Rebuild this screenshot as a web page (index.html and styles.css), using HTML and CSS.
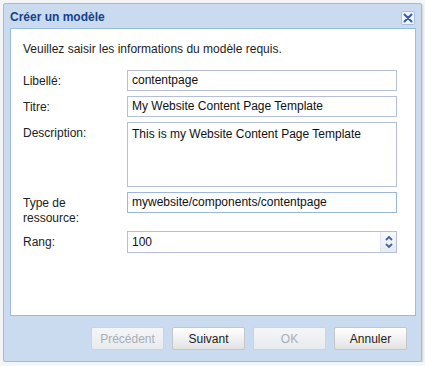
FILE: index.html
```html
<!DOCTYPE html>
<html lang="fr">
<head>
    <meta charset="UTF-8" />
    <title>Créer un modèle</title>
    <link rel="stylesheet" href="styles.css">
</head>
<body>

    <div class="dialog">
        <div class="dialog-header">
            <span class="dialog-title">Créer un modèle</span>
            <span class="close-btn">
                <svg width="10" height="10" viewBox="0 0 10 10">
                    <path d="M1.5 1.5 L8.5 8.5 M8.5 1.5 L1.5 8.5" stroke="#3c5aa5" stroke-width="2" stroke-linecap="round" fill="none" />
                </svg>
            </span>
        </div>

        <div class="dialog-body">
            <p class="intro">Veuillez saisir les informations du modèle requis.</p>

            <div class="form">
                <label class="field-label">Libellé:</label>
                <div class="field">contentpage</div>

                <label class="field-label">Titre:</label>
                <div class="field">My Website Content Page Template</div>

                <label class="field-label">Description:</label>
                <div class="field field-area">This is my Website Content Page Template</div>

                <label class="field-label">Type de<br>ressource:</label>
                <div class="field field-focus">mywebsite/components/contentpage</div>

                <label class="field-label">Rang:</label>
                <div class="field field-spin">
                    <span class="spin-value">100</span>
                    <span class="spinner">
                        <svg width="14" height="18" viewBox="0 0 14 18">
                            <path d="M4 7 L7 4 L10 7" stroke="#4a5d9c" stroke-width="1.8" fill="none" />
                            <path d="M4 11 L7 14 L10 11" stroke="#4a5d9c" stroke-width="1.8" fill="none" />
                        </svg>
                    </span>
                </div>
            </div>
        </div>

        <div class="dialog-footer">
            <button class="btn" disabled>Précédent</button>
            <button class="btn">Suivant</button>
            <button class="btn" disabled>OK</button>
            <button class="btn">Annuler</button>
        </div>
    </div>

</body>
</html>
```

FILE: styles.css
```css
body {
    font-family: 'Liberation Sans', Arial, sans-serif;
    font-size: 12px;
    margin: 0;
    padding: 3px 0 0 3px;
    background: #f4f5f7;
    color: #222;
}

.dialog {
    width: 417px;
    height: 357px;
    border: 1px solid #9fbbe0;
    border-radius: 2px;
    background: #cbdbef;
    display: flex;
    flex-direction: column;
    box-shadow: 1px 1px 2px rgba(0, 0, 0, 0.15);
}

.dialog-header {
    height: 24px;
    display: flex;
    align-items: center;
    justify-content: space-between;
    padding: 0 6px 0 6px;
}

.dialog-title {
    font-weight: bold;
    color: #15428b;
    margin-top: 1px;
}

.close-btn {
    width: 12px;
    height: 12px;
    border: 1px solid #a9c1e2;
    border-radius: 2px;
    background: #eef4fc;
    display: flex;
    align-items: center;
    justify-content: center;
    margin-top: 3px;
}

.dialog-body {
    box-sizing: border-box;
    margin: 0 5px 0 6px;
    height: 288px;
    background: #fff;
    border: 1px solid #99bbe8;
    padding: 13px 17px 0 12px;
}

.intro {
    margin: 0;
    line-height: 14px;
    color: #222;
}

.form {
    margin-top: 14px;
    display: grid;
    grid-template-columns: 104px 270px;
    row-gap: 5px;
}

.field-label {
    padding-top: 4px;
    line-height: 15px;
}

.field {
    height: 19px;
    border: 1px solid #b5bfd8;
    padding: 0 4px;
    line-height: 19px;
    color: #111;
    background: #fff;
}

.field-area {
    box-sizing: border-box;
    height: 65px;
    line-height: 14px;
    padding-top: 4px;
}

.field-focus {
    border-color: #9cb6dc;
    background: #fdfeff;
}

.field-spin {
    display: flex;
    justify-content: space-between;
    align-items: center;
    padding-right: 0;
    height: 20px;
    line-height: 20px;
}

.spinner {
    display: flex;
    align-items: center;
    justify-content: center;
    width: 15px;
    height: 20px;
    background: linear-gradient(#f6f8fb, #e6ebf2);
    border-left: 1px solid #e0e5ee;
}

.dialog-footer {
    flex: 1;
    display: flex;
    justify-content: flex-end;
    align-items: flex-start;
    gap: 8px;
    padding: 11px 14px 0 0;
}

.btn {
    width: 73px;
    height: 23px;
    font-family: 'Liberation Sans', Arial, sans-serif;
    font-size: 12px;
    color: #222;
    border: 1px solid #c3c6cc;
    border-radius: 2px;
    background: linear-gradient(#ffffff, #f1f1f1 50%, #e2e2e2);
    padding: 0;
}

.btn:disabled {
    color: #a8aeb6;
    background: linear-gradient(#f4f6f8, #e8ebee);
    border-color: #d0d4da;
}
```
